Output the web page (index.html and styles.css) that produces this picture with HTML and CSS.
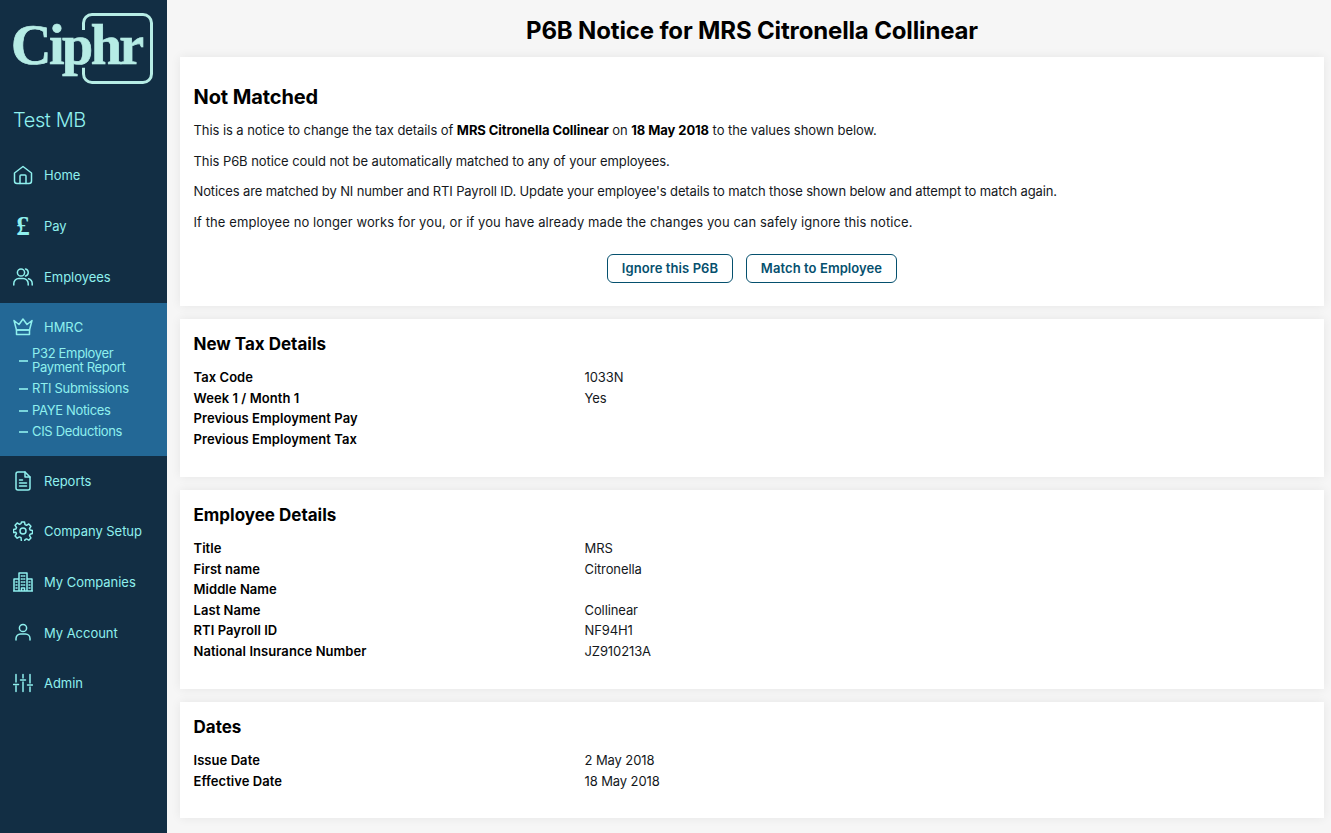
FILE: index.html
```html
<!DOCTYPE html>
<html lang="en">
<head>
<meta charset="utf-8">
<title>P6B Notice</title>
<link rel="stylesheet" href="styles.css">
</head>
<body>
<div class="app">
  <aside class="sidebar">
    <div class="logo"><span class="logo-text">Ciphr</span><span class="logo-box"></span></div>
    <div class="company">Test MB</div>
    <nav class="nav">
      <a class="nav-item"><svg class="icon" viewBox="0 0 20 20"><path d="M1.500 8 10 1.500 18.500 8v8a2.500 2.500 0 0 1-2.500 2.500H4A2.500 2.500 0 0 1 1.500 16z"/><path d="M7 18.500V11a1 1 0 0 1 1-1h4a1 1 0 0 1 1 1v7.500"/></svg><span>Home</span></a>
      <a class="nav-item"><span class="icon pound">£</span><span>Pay</span></a>
      <a class="nav-item"><svg class="icon" viewBox="0 0 20 20"><circle cx="8" cy="5.500" r="3.600"/><path d="M.8 18v-1.500A5 5 0 0 1 5.800 11.500h4.400a5 5 0 0 1 5 5V18"/><path d="M12.500 2a3.600 3.600 0 0 1 0 7"/><path d="M15.500 11.800a5 5 0 0 1 3.700 4.700V18"/></svg><span>Employees</span></a>
      <div class="nav-group">
        <a class="nav-item group-head"><svg class="icon" viewBox="0 0 20 20"><path d="M3.500 13 1 3.500l5 4 4-5.500 4 5.500 5-4L16.500 13z"/><path d="M3.500 13h13v4.500h-13z"/></svg><span>HMRC</span></a>
        <ul class="subnav">
          <li class="sub-item two-line">P32 Employer Payment Report</li>
          <li class="sub-item">RTI Submissions</li>
          <li class="sub-item">PAYE Notices</li>
          <li class="sub-item">CIS Deductions</li>
        </ul>
      </div>
      <a class="nav-item"><svg class="icon" viewBox="0 0 20 20"><path d="M3 3a2 2 0 0 1 2-2h7l5 5v11a2 2 0 0 1-2 2H5a2 2 0 0 1-2-2z"/><path d="M12 1v5h5M6.500 9h3M6.500 12h7M6.500 15h7"/></svg><span>Reports</span></a>
      <a class="nav-item"><svg class="icon" viewBox="0 0 20 20"><circle cx="10" cy="10" r="3"/><path d="M8.500 1h3l.5 2.600 1.500.7 2.300-1.300 2.100 2.300-1.400 2.200.6 1.500 2.400.6v3l-2.400.6-.6 1.500 1.400 2.200-2.100 2.300-2.300-1.300-1.500.7-.5 2.400h-3L8 16.600l-1.500-.7-2.300 1.300-2.100-2.300 1.400-2.200-.6-1.500L.5 11.600v-3l2.400-.6.600-1.500-1.400-2.200L4.200 2l2.300 1.300L8 2.600z"/></svg><span>Company Setup</span></a>
      <a class="nav-item"><svg class="icon" viewBox="0 0 20 20"><path d="M6 19V1h8v18M1 19V7h5M14 7h5v12M.5 19h19M8.500 19v-3h3v3M8.300 4h1M10.700 4h1M8.300 7h1M10.700 7h1M8.300 10h1M10.700 10h1M8.300 13h1M10.700 13h1M3 10h1M3 13h1M3 16h1M16 10h1M16 13h1M16 16h1"/></svg><span>My Companies</span></a>
      <a class="nav-item"><svg class="icon" viewBox="0 0 20 20"><circle cx="10" cy="5" r="3.600"/><path d="M3 17v-1.500A4.500 4.500 0 0 1 7.500 11h5a4.500 4.500 0 0 1 4.500 4.500V17"/></svg><span>My Account</span></a>
      <a class="nav-item"><svg class="icon" viewBox="0 0 20 20"><path d="M3 1.500V9M3 13v5.500M10 1.500V5M10 9v9.500M17 1.500V10M17 14v4.500M.5 11.500h5M7.500 7h5M14.500 12h5"/></svg><span>Admin</span></a>
    </nav>
  </aside>
  <main class="main">
    <h1 class="page-title">P6B Notice for MRS Citronella Collinear</h1>
    <section class="card card-notice">
      <h2 class="notice-title">Not Matched</h2>
      <p class="para para-lead">This is a notice to change the tax details of <b>MRS Citronella Collinear</b> on <b>18 May 2018</b> to the values shown below.</p>
      <p class="para">This P6B notice could not be automatically matched to any of your employees.</p>
      <p class="para para-tight">Notices are matched by NI number and RTI Payroll ID. Update your employee's details to match those shown below and attempt to match again.</p>
      <p class="para para-wide">If the employee no longer works for you, or if you have already made the changes you can safely ignore this notice.</p>
      <div class="actions">
        <button class="btn btn-ignore">Ignore this P6B</button>
        <button class="btn btn-match">Match to Employee</button>
      </div>
    </section>
    <section class="card card-tax">
      <h3 class="card-title">New Tax Details</h3>
      <dl class="details">
        <dt>Tax Code</dt><dd>1033N</dd>
        <dt>Week 1 / Month 1</dt><dd>Yes</dd>
        <dt>Previous Employment Pay</dt><dd></dd>
        <dt>Previous Employment Tax</dt><dd></dd>
      </dl>
    </section>
    <section class="card card-emp">
      <h3 class="card-title">Employee Details</h3>
      <dl class="details">
        <dt>Title</dt><dd>MRS</dd>
        <dt>First name</dt><dd>Citronella</dd>
        <dt>Middle Name</dt><dd></dd>
        <dt>Last Name</dt><dd>Collinear</dd>
        <dt>RTI Payroll ID</dt><dd>NF94H1</dd>
        <dt>National Insurance Number</dt><dd>JZ910213A</dd>
      </dl>
    </section>
    <section class="card card-dates">
      <h3 class="card-title">Dates</h3>
      <dl class="details">
        <dt>Issue Date</dt><dd>2 May 2018</dd>
        <dt>Effective Date</dt><dd>18 May 2018</dd>
      </dl>
    </section>
  </main>
</div>
</body>
</html>
```
FILE: styles.css
```css
* { box-sizing: border-box; }
html, body { margin: 0; height: 100%; }
body {
  font-family: Inter, "Noto Sans", sans-serif;
  font-size: 13px;
  color: #14181c;
  background: #f6f6f6;
  overflow: hidden;
}
.app { display: flex; height: 833px; }
.sidebar {
  width: 167px;
  flex: none;
  background: #122e44;
  color: #8ff0ee;
}
.logo {
  position: relative;
  height: 84px;
  margin: 13px 0 0 13px;
  width: 141px;
}
.logo-text {
  position: absolute;
  left: -2px;
  top: 4px;
  font-family: "Liberation Serif", serif;
  font-weight: 700;
  font-size: 56px;
  line-height: 56px;
  letter-spacing: -2.500px;
  -webkit-text-stroke: .7px #b6ece5;
  color: #b6ece5;
}
.logo-box {
  position: absolute;
  left: 69px;
  top: 0;
  width: 71px;
  height: 71px;
  border: 3px solid #b6ece5;
  border-radius: 10px;
  clip-path: polygon(0 0, 100% 0, 100% 100%, 0 100%, 0 77%, 10% 77%, 10% 24%, 0 24%);
}
.company {
  margin: 10px 0 0 13px;
  font-size: 20px;
  line-height: 26px;
  height: 26px;
  letter-spacing: -.4px;
  font-weight: 300;
  color: #8ff0ee;
}
.nav { margin-top: 17px; display: flex; flex-direction: column; }
.nav-item {
  display: flex;
  align-items: center;
  height: 51px;
  padding: 0 0 1px 13px;
  font-size: 13px;
  letter-spacing: -.03px;
}
.nav-group ~ .nav-item { height: 50.600px; }
.icon {
  width: 20px;
  height: 20px;
  flex: none;
  margin-right: 11px;
  fill: none;
  stroke: #8ff0ee;
  stroke-width: 1.500;
  stroke-linejoin: round;
  stroke-linecap: round;
}
.pound {
  font-family: "Liberation Serif", serif;
  font-weight: 700;
  font-size: 27px;
  line-height: 20px;
  text-align: center;
  color: #8ff0ee;
}
.nav-group { background: #236896; height: 153px; }
.group-head { height: 48px; padding-bottom: 0; }
.subnav { list-style: none; margin: -5px 0 0; padding: 0; }
.sub-item {
  position: relative;
  padding-left: 32px;
  font-size: 13px;
  line-height: 14px;
  letter-spacing: -.33px;
  margin-bottom: 7.400px;
  color: #8ff0ee;
}
.sub-item::before {
  content: "";
  position: absolute;
  left: 19px;
  top: 7px;
  width: 9px;
  height: 2px;
  background: #8ff0ee;
  opacity: .8;
}
.two-line { width: 130px; }
.two-line::before { top: 14px; }

.main { flex: 1; padding: 0 7px 0 13px; min-width: 0; }
.page-title {
  margin: 0;
  height: 57px;
  line-height: 61px;
  font-size: 24px;
  font-weight: 700;
  text-align: center;
  letter-spacing: -.15px;
  color: #000;
}
.card {
  background: #fff;
  padding: 0 13.500px;
  margin-bottom: 13px;
  box-shadow: 0 0 10px rgba(0, 0, 0, .07);
}
.card-notice { height: 249px; padding-top: 26px; }
.card-tax { height: 158px; padding-top: 13px; }
.card-emp { height: 199px; padding-top: 13px; }
.card-dates { height: 116px; padding-top: 13px; }
.notice-title {
  margin: 0;
  font-size: 20px;
  line-height: 28px;
  font-weight: 700;
  letter-spacing: -.1px;
  color: #000;
}
.para {
  margin: 0 0 10.600px;
  line-height: 20px;
  font-size: 13px;
  letter-spacing: -.07px;
}
.para b { font-weight: 700; color: #000; }
.para-lead { margin-top: 9px; }
.para-tight { letter-spacing: -.125px; }
.para-wide { letter-spacing: .095px; }
.actions { display: flex; justify-content: center; gap: 13px; margin-top: 22px; }
.btn {
  height: 29px;
  padding: 0;
  background: #fff;
  border: 1px solid #05506e;
  border-radius: 6px;
  color: #05506e;
  font: 600 13px Inter, sans-serif;
  letter-spacing: .08px;
}
.btn-ignore { width: 126px; }
.btn-match { width: 151px; }
.card-title {
  margin: 0 0 11px;
  font-size: 17px;
  line-height: 24px;
  font-weight: 700;
  letter-spacing: 0;
  color: #000;
}
.details {
  display: grid;
  grid-template-columns: 391px 1fr;
  grid-auto-rows: 20.600px;
  line-height: 20.600px;
  margin: 0;
}
.details dt { font-weight: 600; font-size: 13px; letter-spacing: .06px; color: #000; }
.details dd { margin: 0; font-size: 13px; letter-spacing: -.1px; }
```
